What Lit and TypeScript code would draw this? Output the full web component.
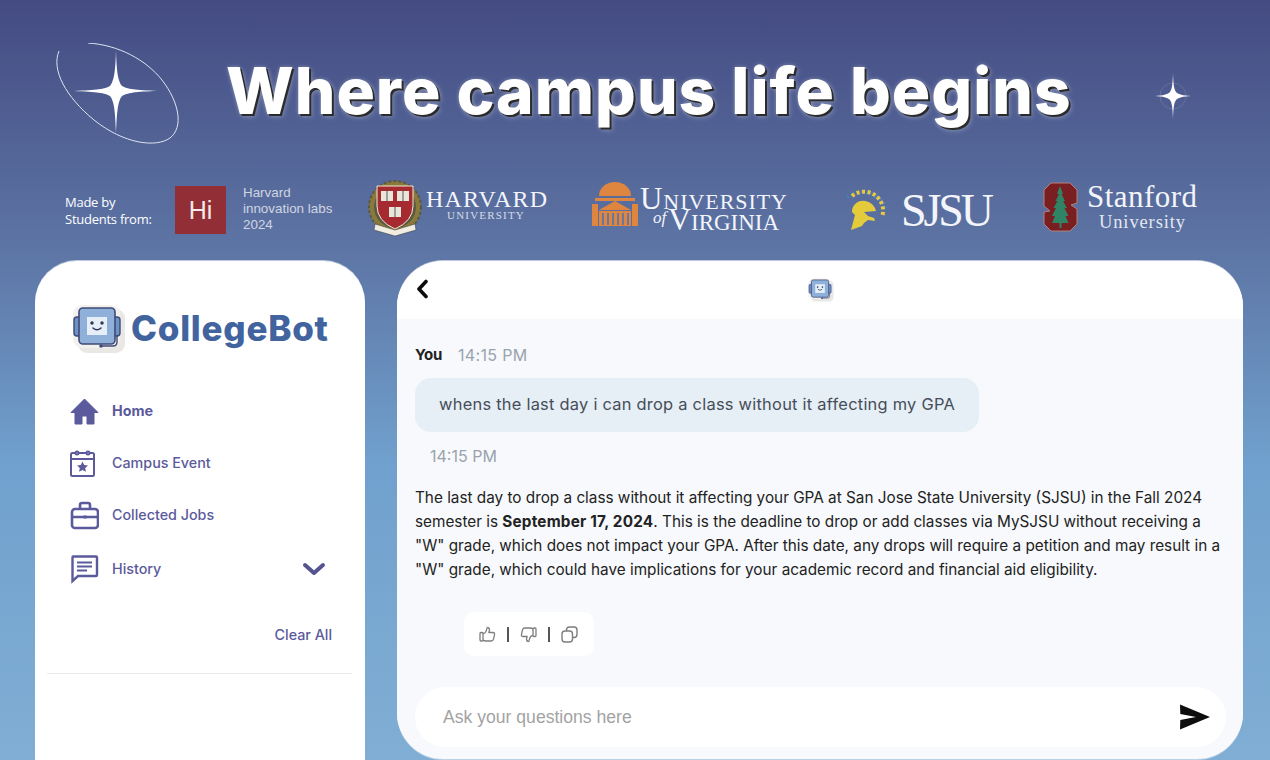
import { LitElement, html, css } from "lit";
import { customElement } from "lit/decorators.js";

const robot = (w: number, h: number) => html`<svg width=${w} height=${h} viewBox="0 0 54 50">
  <rect x="6" y="5" width="47" height="44" rx="9" fill="#e9e8e4"/>
  <rect x="1" y="1" width="47" height="43" rx="9" fill="#f2f1ee"/>
  <rect x="2" y="13" width="8" height="19" rx="3" fill="#6d93c4" stroke="#3f4a78" stroke-width="1.4"/>
  <rect x="40" y="13" width="8" height="19" rx="3" fill="#6d93c4" stroke="#3f4a78" stroke-width="1.4"/>
  <rect x="7" y="4" width="36" height="36" rx="4" fill="#8fb0d9" stroke="#3f4a78" stroke-width="1.6"/>
  <rect x="15" y="13" width="20" height="18" fill="#e6eef7"/>
  <circle cx="20" cy="19" r="1.7" fill="#2f3556"/><circle cx="30" cy="19" r="1.7" fill="#2f3556"/>
  <path d="M21 24q4 3.6 8 0" fill="none" stroke="#2f3556" stroke-width="1.5" stroke-linecap="round"/>
  <path d="M30 42h11q4 0 4-4v-7" fill="none" stroke="#3f4a78" stroke-width="1.4"/>
  <circle cx="29" cy="42" r="1.8" fill="#3f4a78"/>
</svg>`;

@customElement("app-root")
export class AppRoot extends LitElement {
  static styles = css`
    :host { display: block; width: 1270px; height: 760px; overflow: hidden; }
    .page { width: 1270px; height: 760px; overflow: hidden; display: flex; flex-direction: column;
      background: linear-gradient(180deg, #444b82 0, #5d75a5 250px, #70a0cd 460px, #80aed4 760px);
      font-family: "Liberation Sans", sans-serif; }
    .hero { height: 180px; flex: none; display: flex; align-items: flex-start; padding-left: 54px; }
    .orbit { margin-top: 43px; flex: none; }
    h1 { margin: 49px 0 0 44px; width: 880px; flex: none; font: 800 64px/84px Inter, sans-serif; letter-spacing: 1px; color: #fff; white-space: nowrap;
      text-shadow: 2px 2px 0 #2b2b2b, 0 0 4px rgba(255,255,255,.3), 3px 3px 5px rgba(255,255,255,.25); }
    .spark { margin: 71px 0 0 49px; flex: none; }
    .logos { height: 81px; flex: none; display: flex; align-items: flex-start; padding-left: 65px; }
    .made { width: 110px; flex: none; margin-top: 14px; color: #fff; font: 500 13px/17px "Open Sans", sans-serif; letter-spacing: -.25px; }
    .hi { width: 51px; height: 48px; flex: none; margin-top: 6px; background: #922e35; color: #f5e8e8; display: flex; align-items: center; justify-content: center;
      font: 400 25px/1 "Liberation Sans", sans-serif; }
    .hil { width: 127px; flex: none; margin: 5px 0 0 17px; color: rgba(255,255,255,.72); font: 400 13.4px/16px "Liberation Sans", sans-serif; }
    .logo { flex: none; display: block; }
    .l-harvard { margin-left: -2px; }
    .l-uva { margin-left: 44px; }
    .l-sjsu { margin-left: 52px; }
    .l-stan { margin-left: 46px; }
    .logotext { font-family: "Liberation Serif", serif; fill: #f3f5fa; }
    .main { flex: none; display: flex; align-items: flex-start; gap: 32px; padding-left: 35px; }
    .side { width: 330px; height: 560px; flex: none; box-sizing: border-box; background: #fff; border-radius: 42px; box-shadow: 0 -1px 0 rgba(255,255,255,.6);
      padding: 44px 13px 0 12px; color: #5b5a9c; }
    .brand { display: flex; align-items: center; gap: 5px; padding-left: 25px; height: 48px; }
    .brand b { font: 800 35px/1 Inter, sans-serif; letter-spacing: .75px; color: #41649f; margin-top: -2px; }
    .nav { display: flex; flex-direction: column; margin-top: 32px; padding-left: 23px; padding-right: 26px; }
    .nav a { display: flex; align-items: center; height: 52px; gap: 13px; font: 500 14.3px/1 Inter, sans-serif; }
    .nav a svg:first-child { width: 29px; height: 30px; flex: none; }
    .nav a.on { font-weight: 700; }
    .nav a.hist { height: 56px; }
    .nav a .chev { margin-left: auto; }
    .clear { display: block; text-align: right; margin: 28px 20px 0 0; font: 500 14.3px/20px Inter, sans-serif; }
    .rule { height: 1px; background: #e9e9e9; margin-top: 28px; }
    .chat { width: 846px; height: 498px; flex: none; display: flex; flex-direction: column; border-radius: 46px; overflow: hidden; background: #f7f9fc; box-shadow: 0 -1px 0 rgba(255,255,255,.6), 0 1px 0 rgba(255,255,255,.45); }
    .bar { height: 58px; flex: none; background: #fff; display: flex; align-items: center; position: relative; padding: 0 0 2px 19px; box-sizing: border-box; }
    .bar .mid { position: absolute; left: 411px; top: 17px; }
    .body { flex: 1; display: flex; flex-direction: column; padding: 25px 17px 12px 18px; position: relative; }
    .who { display: flex; align-items: center; gap: 16px; height: 22px; font: 400 16px/22px Inter, sans-serif; letter-spacing: .35px; color: #9aa3ad; }
    .who b { font-weight: 700; color: #222; font-size: 15px; letter-spacing: -.3px; }
    .bubble { margin-top: 12px; width: 564px; height: 54px; box-sizing: border-box; padding: 0 0 2px 24px; display: flex; align-items: center; background: #e6eef6; border-radius: 16px;
      font: 400 16.4px/1 Inter, sans-serif; letter-spacing: .26px; color: #454d58; white-space: nowrap; }
    .time { margin: 13px 0 0 15px; font: 400 16px/22px Inter, sans-serif; color: #9aa3ad; }
    .ans { margin: 19px 0 0; width: 808px; font: 400 15.3px/24px Inter, sans-serif; color: #222; }
    .ans b { letter-spacing: .2px; }
    .acts { margin: 30px 0 0 49px; width: 130px; height: 44px; box-sizing: border-box; background: #fff; border-radius: 10px; display: flex; align-items: center; gap: 11px; padding-left: 15px; }
    .acts i { width: 2px; height: 15px; background: #555; display: block; }
    .ask { margin-top: 31px; height: 60px; width: 811px; flex: none; box-sizing: border-box; background: #fff; border-radius: 30px; display: flex; align-items: center; padding: 0 15px 0 28px; justify-content: space-between;
      font: 400 17.6px/1 "Liberation Sans", sans-serif; color: #a3a3a3; }
    .ask span { margin-top: 2px; }
  `;

  render() {
    return html`<div class="page">
      <div class="hero">
        <svg class="orbit" width="128" height="104" viewBox="0 0 128 104">
          <path d="M5 9C-3 28 12 55 40 78c30 24 62 28 76 18 14-11 9-36-8-58C92 18 65 3 34 1" fill="none" stroke="#dfe4f0" stroke-width="1" transform="translate(0,-1)"/>
          <path d="M62 7c.6 22 2 31 6 36 5 3 13 4 36 5-23 .6-31 2-36 5-4 5-5 14-6 37-.8-23-2-32-6-37-5-3-13-4-36-5 23-1 31-2 36-5 4-5 5.400-14 6-36z" fill="#fff"/>
          <circle cx="62" cy="48" r="7.500" fill="#fff"/>
        </svg>
        <h1>Where campus life begins</h1>
        <svg class="spark" width="36" height="50" viewBox="0 0 36 50">
          <circle cx="18" cy="25" r="13" fill="none" stroke="#fff" stroke-opacity=".12"/>
          <path d="M18 2c.4 13 1.200 17 3.500 19.500 2.500 2 6 3 14.500 3.500-8.500.5-12 1.500-14.500 3.500-2.300 2.500-3.100 7-3.500 19.500-.4-12.500-1.200-17-3.500-19.500-2.500-2-6-3-14.500-3.500 8.500-.5 12-1.500 14.500-3.500 2.300-2.500 3.100-6.500 3.500-19.500z" fill="#fff"/>
        </svg>
      </div>
      <div class="logos">
        <div class="made">Made by<br />Students from:</div>
        <div class="hi">Hi</div>
        <div class="hil">Harvard<br />innovation labs<br />2024</div>
        <svg class="logo l-harvard" width="180" height="58" viewBox="0 0 180 58">
          <circle cx="27" cy="27" r="26" fill="#8a7a3a" stroke="#5a5a44" stroke-width="2" stroke-dasharray="3 2"/>
          <circle cx="27" cy="27" r="21" fill="#5a5a44"/>
          <path d="M9 6h36v20q0 15-18 23Q9 41 9 26z" fill="#a62b30" stroke="#f1e9d8" stroke-width="1"/>
          <rect x="13" y="11" width="12" height="10" fill="#e8e6da"/><rect x="29" y="11" width="12" height="10" fill="#e8e6da"/><rect x="21" y="27" width="12" height="10" fill="#e8e6da"/>
          <path d="M19 11v10M35 11v10M27 27v10" stroke="#555"/>
          <path d="M7 44l20 6 20-6 1 6-21 6-21-6z" fill="#f1ede2" stroke="#333" stroke-width=".5"/>
          <text class="logotext" x="58" y="27" font-size="24" textLength="121">HARVARD</text>
          <text class="logotext" x="118" y="39" font-size="11" letter-spacing="1.2" text-anchor="middle" opacity=".8">UNIVERSITY</text>
        </svg>
        <svg class="logo l-uva" width="200" height="58" viewBox="0 0 200 58">
          <path d="M7 16a16 14 0 0 1 32 0z" fill="#de8540"/>
          <path d="M3 18h40v3H3zM0 24h6v22H0zM40 24h6v22h-6z" fill="#de8540"/>
          <path d="M7 30L23 21l16 9z" fill="#de8540"/>
          <rect x="7" y="31" width="32" height="15" fill="#de8540"/>
          <path d="M11 33v12M16 33v12M21 33v12M26 33v12M31 33v12M36 33v12" stroke="#5e76a6" stroke-width="1.800"/>
          <text class="logotext" x="48" y="29" font-size="22" textLength="147"><tspan font-size="31">U</tspan>NIVERSITY</text>
          <text class="logotext" x="76" y="50" font-size="23" textLength="111"><tspan font-size="32">V</tspan>IRGINIA</text>
          <text class="logotext" x="61" y="43" font-size="17" font-style="italic">of</text>
        </svg>
        <svg class="logo l-sjsu" width="152" height="58" viewBox="0 0 152 58">
          <path d="M3 17A26 26 0 0 1 42 28" fill="none" stroke="#4a82c0" stroke-width="4" stroke-dasharray="2 3" opacity=".75"/>
          <path d="M8 16A19 19 0 0 1 38 37" fill="none" stroke="#e8c83e" stroke-width="4" stroke-dasharray="3 2.500"/>
          <path d="M7 50l4-15-3-3c0-7 6-12 13-11 6 1 10 5 11 10l-12 1 4 4 6 2 1 3-7-1-4 3-2 3z" fill="#e4cb3b"/>
          <text class="logotext" x="57" y="46" font-size="46" textLength="93">SJSU</text>
        </svg>
        <svg class="logo l-stan" width="160" height="58" viewBox="0 0 160 58">
          <path d="M9 3h19l7 7v13l-6 2 6 4v15l-7 7H9l-7-7V32l6-1-6-5V10z" fill="#7a1f21" stroke="#b58179" stroke-width="1"/>
          <path d="M18 6l3 8-1.500 0 3.500 7h-2l4 7h-2.500l4 8h-3l3 7h-7v5h-2v-5H10l3-7h-3l4-8h-2.500l4-7h-2l3.500-7H15z" fill="#2f8465"/>
          <text class="logotext" x="45" y="27" font-size="31" textLength="110">Stanford</text>
          <text class="logotext" x="57" y="48" font-size="18.500" textLength="86" opacity=".9">University</text>
        </svg>
      </div>
      <div class="main">
        <aside class="side">
          <div class="brand">${robot(54, 50)}<b>CollegeBot</b></div>
          <nav class="nav">
            <a class="on"><svg viewBox="0 0 29 30"><path d="M14.500 3L1 16.500h4V28h7v-8h5v8h7V16.500h4z" fill="#5b5a9c" stroke="#5b5a9c" stroke-linejoin="round"/></svg>Home</a>
            <a><svg viewBox="0 0 29 30" fill="none" stroke="#5b5a9c" stroke-width="2"><rect x="1" y="5" width="23" height="23" rx="1.500"/><path d="M1 11h23"/><circle cx="7" cy="5" r="1.500" fill="#fff"/><circle cx="18" cy="5" r="1.500" fill="#fff"/><path d="M12.500 13.500l1.700 3.400 3.800.5-2.800 2.600.7 3.700-3.400-1.800-3.400 1.800.7-3.700-2.800-2.600 3.800-.5z" fill="#5b5a9c" stroke="none"/></svg>Campus Event</a>
            <a><svg viewBox="0 0 29 30" fill="none" stroke="#5b5a9c" stroke-width="2.600"><rect x="2" y="9" width="26" height="19" rx="3"/><path d="M10 9V5q0-2 2-2h6q2 0 2 2v4M2 17h26"/><rect x="13.500" y="15.500" width="3" height="3" fill="#5b5a9c" stroke="none"/></svg>Collected Jobs</a>
            <a class="hist"><svg viewBox="0 0 29 30" fill="none" stroke="#5b5a9c" stroke-width="2.400"><path d="M3 2.500h23q1 0 1 1V21q0 1-1 1H8L2.500 27V3.500q0-1 .5-1z"/><path d="M7 8.500h15M7 12.500h15M7 16.500h10" stroke-width="2"/></svg>History
              <svg class="chev" width="24" height="14" viewBox="0 0 24 14"><path d="M3 3l9 8 9-8" fill="none" stroke="#55548f" stroke-width="4" stroke-linecap="round" stroke-linejoin="round"/></svg></a>
          </nav>
          <a class="clear">Clear All</a>
          <div class="rule"></div>
        </aside>
        <section class="chat">
          <div class="bar">
            <svg width="13" height="20" viewBox="0 0 13 20"><path d="M10 2.500L3 10l7 7.500" fill="none" stroke="#0c0c0c" stroke-width="3.600" stroke-linecap="round" stroke-linejoin="round"/></svg>
            <span class="mid">${robot(26, 24)}</span>
          </div>
          <div class="body">
            <div class="who"><b>You</b><span>14:15 PM</span></div>
            <div class="bubble">whens the last day i can drop a class without it affecting my GPA</div>
            <div class="time">14:15 PM</div>
            <p class="ans">The last day to drop a class without it affecting your GPA at San Jose State University (SJSU) in the Fall 2024 semester is <b>September 17, 2024</b>. This is the deadline to drop or add classes via MySJSU without receiving a "W" grade, which does not impact your GPA. After this date, any drops will require a petition and may result in a "W" grade, which could have implications for your academic record and financial aid eligibility.</p>
            <div class="acts">
              <svg width="17" height="17" viewBox="0 0 17 17" fill="none" stroke="#7d7d7d" stroke-width="1.300" stroke-linejoin="round"><rect x="1" y="6.500" width="3" height="8.500" rx="1"/><path d="M4 7.500c2 0 3.500-2.500 4-5.500 0-1 2.500-.8 2.500 1.500 0 1.500-.5 2.500-.7 3H14q2 .2 1.500 2.200l-1 4.500Q14 15 12 15H7q-2 0-3-1"/></svg>
              <i></i>
              <svg width="17" height="17" viewBox="0 0 17 17" fill="none" stroke="#7d7d7d" stroke-width="1.300" stroke-linejoin="round"><rect x="13" y="2" width="3" height="8.500" rx="1"/><path d="M13 9.500c-2 0-3.500 2.500-4 5.500 0 1-2.500.8-2.500-1.500 0-1.500.5-2.500.7-3H3q-2-.2-1.500-2.200l1-4.500Q3 2 5 2h5q2 0 3 1"/></svg>
              <i></i>
              <svg width="17" height="17" viewBox="0 0 17 17" fill="none" stroke="#7d7d7d" stroke-width="1.400"><rect x="1" y="5" width="10.500" height="11" rx="3"/><path d="M5.500 5V4q0-3 3-3H13q3 0 3 3v4.500q0 3-3 3h-1.500"/></svg>
            </div>
            <div class="ask"><span>Ask your questions here</span>
              <svg width="32" height="28" viewBox="0 0 32 28"><path d="M1 1.500L31 14 1 26.500l.3-9.500L17 14 1.300 11z" fill="#0d0d0d"/></svg>
            </div>
          </div>
        </section>
      </div>
    </div>`;
  }
}
